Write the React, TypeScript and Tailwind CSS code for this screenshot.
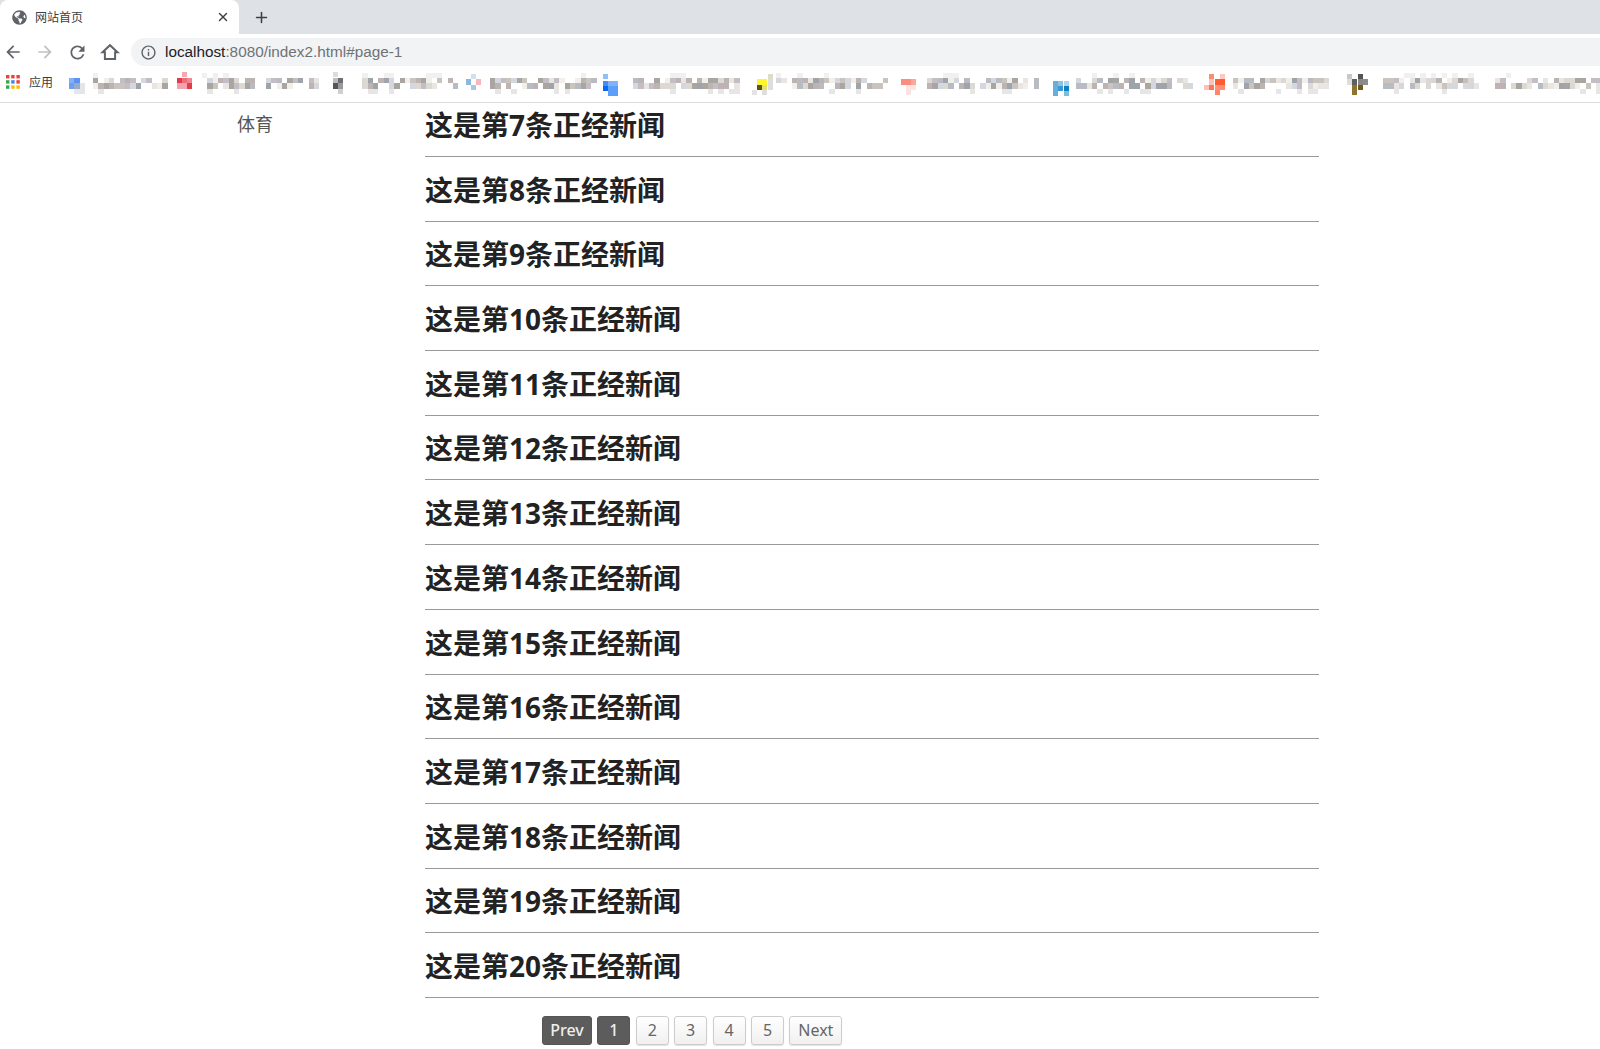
import { Plus, X } from "lucide-react";
import { FaGlobeAmericas } from "react-icons/fa";
import { MdArrowBack, MdArrowForward, MdInfoOutline, MdRefresh } from "react-icons/md";

const newsIds = [7, 8, 9, 10, 11, 12, 13, 14, 15, 16, 17, 18, 19, 20];
const pages = ["1", "2", "3", "4", "5"];

const BLOCK = 5.33;
const textTones = ["#c9c4bd", "#b8bcc2", "#a9a5a1", "#dcd8d4", "#d4d8de", "#bdb3b3", "#e9e6e2", "#9ea4aa", "#c4bdc6", "#f1efe9"];

// blurred bookmark labels: [start x, end x]
const blurredRuns = [
  [93, 165], [202, 316], [357, 453], [490, 592], [633, 735], [776, 886], [927, 1036], [1076, 1191], [1233, 1325], [1383, 1475], [1495, 1600]
];

// blurred favicons: [x, y, colour] on the 5.33px grid
const blurredIcons: [number, number, string][] = [
  [69, 78, "#7fb0f8"], [74.3, 78, "#5c93f2"], [69, 83.3, "#6f9ff0"], [74.3, 83.3, "#97acc8"], [79.6, 83.3, "#e3e5e8"], [74.3, 88.6, "#e4e6ea"], [79.6, 88.6, "#e3e5e8"],
  [182, 72, "#f4a9b1"], [177, 78, "#e43a4c"], [182, 78, "#ee6d7b"], [187, 78, "#ee8791"], [177, 83.3, "#f4a3ae"], [182, 83.3, "#f4a3ae"], [187, 83.3, "#e43a4c"],
  [333, 72, "#dcdcdc"], [333, 78, "#bdbdbd"], [338, 78, "#6c6f73"], [333, 83.3, "#555659"], [338, 83.3, "#9a9a9a"], [338, 88.6, "#cfcfcf"],
  [471, 74, "#cfe0ee"], [466, 79.3, "#8db9d8"], [476, 79.3, "#f6b7bd"], [471, 84.6, "#a8c8e0"],
  [603, 74, "#8cc0fb"], [603, 81, "#3f8ef7"], [608, 81, "#7cb3fb"], [613, 81, "#7cb3fb"], [603, 86, "#0b67f0"], [608, 86, "#5b9ffa"], [613, 86, "#5b9ffa"], [608, 91, "#5b9ffa"], [613, 91, "#5b9ffa"],
  [768, 74, "#dcdcc8"], [757, 79.3, "#fff52e"], [762, 79.3, "#fff52e"], [768, 79.3, "#dedede"], [757, 84.6, "#5c5212"], [762, 84.6, "#e8e26a"], [768, 84.6, "#dedede"], [752, 90, "#e3e3e3"], [762, 90, "#dedede"],
  [901, 79.3, "#f98e80"], [906, 79.3, "#f98e80"], [911, 79.3, "#f9a89c"], [906, 84.6, "#fde4e2"], [911, 84.6, "#fde4e2"], [906, 90, "#fbe3e3"],
  [1053, 81, "#66afda"], [1058, 81, "#8cc2e2"], [1064, 81, "#add5ea"], [1053, 86, "#66afda"], [1058, 86, "#3c98d0"], [1064, 86, "#0e82c0"], [1053, 91, "#66afda"], [1064, 91, "#7ebbdf"],
  [1209, 74, "#fc8b72"], [1220, 74, "#fdc9bd"], [1209, 79.3, "#fdc2b5"], [1215, 79.3, "#ff5b34"], [1220, 79.3, "#ff5b34"], [1204, 84.6, "#fec2b4"], [1209, 84.6, "#ff7656"], [1215, 84.6, "#ff9277"], [1220, 84.6, "#ff8b70"], [1215, 90, "#ff8468"],
  [1347, 74, "#c8c8c8"], [1358, 74, "#545454"], [1347, 79.3, "#dedede"], [1352, 79.3, "#5f5f5f"], [1358, 79.3, "#888888"], [1363, 79.3, "#8c8c8c"], [1352, 84.6, "#8f7430"], [1358, 84.6, "#705a1c"], [1352, 90, "#8f7430"]
];

function seededBlocks() {
  let seed = 17;
  const next = () => {
    seed = (seed * 75 + 74) % 65537;
    return seed;
  };
  const blocks: { x: number; y: number; fill: string }[] = [];
  blurredRuns.forEach(([start, end]) => {
    for (let x = start; x < end; x += BLOCK) {
      [78, 83.3].forEach((y) => {
        if (next() % 4 !== 0) blocks.push({ x, y, fill: textTones[next() % textTones.length] });
      });
      if (next() % 6 === 0) blocks.push({ x, y: 88.6, fill: "#e6e6e6" });
      if (next() % 8 === 0) blocks.push({ x, y: 72.7, fill: "#f0f0f0" });
    }
  });
  return blocks;
}

const blocks = seededBlocks();

function AppsIcon() {
  const colors = ["#ea4335", "#ea4335", "#ea4335", "#34a853", "#4285f4", "#ea4335", "#34a853", "#fbbc05", "#fbbc05"];
  return (
    <svg width="14" height="14" viewBox="0 0 14 14" aria-hidden>
      {colors.map((fill, i) => (
        <rect key={i} x={(i % 3) * 5.2} y={Math.floor(i / 3) * 5.2} width="3.4" height="3.4" fill={fill} />
      ))}
    </svg>
  );
}

function HomeIcon() {
  return (
    <svg width="20" height="20" viewBox="0 0 20 20" fill="none" stroke="#5f6368" strokeWidth="2" aria-hidden>
      <path d="M2.5 10.2 10 3.2l7.5 7h-2.4V17H4.9v-6.8z" strokeLinejoin="miter" />
    </svg>
  );
}

function BrowserChrome() {
  return (
    <header className="font-['Noto_Sans_CJK_SC',sans-serif]">
      <div className="flex h-[34px] bg-[#dee1e6]">
        <div className="flex w-[239px] items-center rounded-t-[8px] bg-white pl-[12px] pr-[9px]">
          <FaGlobeAmericas className="text-[#5f6368]" size={15} aria-hidden />
          <span className="ml-[8px] text-[12px] text-[#3c4043]">网站首页</span>
          <X className="ml-auto text-[#3c4043]" size={14} strokeWidth={2.4} aria-hidden />
        </div>
        <div className="flex items-center pl-[14px]">
          <Plus className="text-[#3c4043]" size={17} strokeWidth={2.2} aria-hidden />
        </div>
      </div>
      <div className="flex h-[33px] items-center bg-white pt-[3px]">
        <div className="flex w-[131px] items-center gap-[12px] pl-[3px] text-[#5f6368]">
          <MdArrowBack size={20} aria-hidden />
          <MdArrowForward className="text-[#bdc1c6]" size={20} aria-hidden />
          <MdRefresh size={21} aria-hidden />
          <HomeIcon />
        </div>
        <div className="flex h-[28px] flex-1 items-center rounded-l-[14px] bg-[#f1f3f4] pl-[9px]">
          <MdInfoOutline className="text-[#5f6368]" size={17} aria-hidden />
          <span className="ml-[8px] font-['Liberation_Sans',sans-serif] text-[15.3px] text-[#6f7276]">
            <span className="text-[#202124]">localhost</span>:8080/index2.html#page-1
          </span>
        </div>
      </div>
      <div className="relative h-[36px] overflow-hidden border-b border-[#dadce0] bg-white">
        <svg className="absolute left-0 top-0" width="1600" height="35" viewBox="0 67 1600 35" shapeRendering="crispEdges" aria-hidden>
          {blocks.map((b, i) => (
            <rect key={i} x={b.x} y={b.y} width={BLOCK} height={BLOCK} fill={b.fill} />
          ))}
          {blurredIcons.map(([x, y, fill], i) => (
            <rect key={i} x={x} y={y} width={BLOCK} height={BLOCK} fill={fill} />
          ))}
        </svg>
        <div className="relative flex h-[30px] items-center pl-[6px]">
          <AppsIcon />
          <span className="ml-[9px] text-[12px] text-[#3c4043]">应用</span>
        </div>
      </div>
    </header>
  );
}

function Pagination() {
  const baseBtn = "flex h-[29px] items-center justify-center rounded-[3px] border text-[16px]";
  const activeBtn = "border-[#555] bg-[#5c5c5c] font-medium text-[#eee]";
  const idleBtn = "border-[#ccc] bg-gradient-to-b from-white to-[#f0f0f0] text-[#666] shadow-[0_1px_1px_rgba(0,0,0,0.12)]";
  return (
    <nav className="flex gap-[5.4px] pl-[117px] pt-[18px] font-['Noto_Sans',sans-serif]">
      <span className={`${baseBtn} ${activeBtn} w-[50px]`}>Prev</span>
      {pages.map((page) => (
        <span key={page} className={`${baseBtn} ${page === "1" ? activeBtn : idleBtn} w-[33px]`}>
          {page}
        </span>
      ))}
      <span className={`${baseBtn} ${idleBtn} w-[53px]`}>Next</span>
    </nav>
  );
}

export default function App() {
  return (
    <div className="h-screen overflow-hidden bg-white">
      <BrowserChrome />
      <main className="flex font-['Noto_Sans','Noto_Sans_CJK_SC',sans-serif]">
        <aside className="w-[425px] pl-[237px] pt-[8px]">
          <a className="text-[18px] leading-[26px] text-[#555]">体育</a>
        </aside>
        <section className="w-[894px]">
          {newsIds.map((id, index) => (
            <article
              key={id}
              className={`flex flex-col justify-end border-b border-[#999] ${index === 0 ? "h-[54px]" : "h-[64.69px]"}`}
            >
              <h2 className="pb-[13px] text-[28px] font-bold leading-[36px] text-[#222]">这是第{id}条正经新闻</h2>
            </article>
          ))}
          <Pagination />
        </section>
      </main>
    </div>
  );
}
